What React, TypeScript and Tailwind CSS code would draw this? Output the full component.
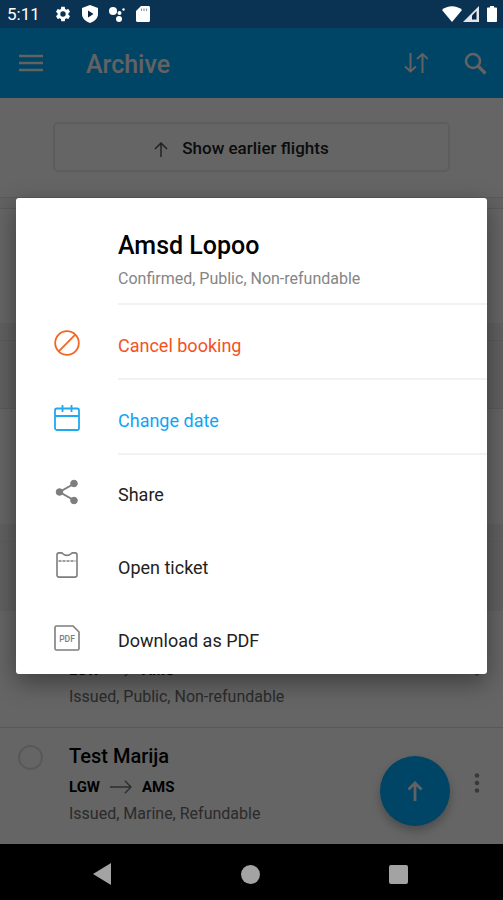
import React from "react";

const bands = [
  { id: "gap-1", className: "h-3 border-y border-[#e2e2e2] bg-[#f4f4f4]" },
  { id: "card-1", className: "h-[114px]" },
  { id: "gap-2", className: "h-[18px] border-b border-[#e2e2e2] bg-[#efefef]" },
  { id: "date-1", className: "h-[68px] border-b border-[#e2e2e2] bg-[#f0f0f0]" },
  { id: "card-2", className: "h-[115px]" },
  { id: "gap-3", className: "h-[18px] border-b border-[#e8e8e8] bg-[#efefef]" },
  { id: "date-2", className: "h-[69px] bg-[#f0f0f0]" },
];

type Booking = {
  id: number;
  name?: string;
  from: string;
  to: string;
  details: string;
};

const bookings: Booking[] = [
  {
    id: 1,
    from: "LGW",
    to: "AMS",
    details: "Issued, Public, Non-refundable",
  },
  {
    id: 2,
    name: "Test Marija",
    from: "LGW",
    to: "AMS",
    details: "Issued, Marine, Refundable",
  },
];

function StatusBar() {
  return (
    <div className="relative z-20 flex h-7 items-center justify-between bg-[#0a3353] pl-[7px] pr-[6px] text-white">
      <div className="flex items-center">
        <span className="w-[47px] text-[17px] leading-7">5:11</span>
        {/* Settings */}
        <svg viewBox="0 0 24 24" className="h-[18px] w-[18px]" fill="currentColor">
          <path d="M19.14 12.94c.04-.3.06-.61.06-.94s-.02-.64-.07-.94l2.03-1.58a.49.49 0 0 0 .12-.61l-1.92-3.32a.49.49 0 0 0-.59-.22l-2.39.96a7 7 0 0 0-1.62-.94l-.36-2.54A.48.48 0 0 0 13.92 2.4h-3.84a.48.48 0 0 0-.47.41l-.36 2.54c-.59.24-1.13.57-1.62.94l-2.39-.96a.48.48 0 0 0-.59.22L2.74 8.87a.48.48 0 0 0 .12.61l2.03 1.58a7.4 7.4 0 0 0 0 1.88l-2.03 1.58a.49.49 0 0 0-.12.61l1.92 3.32c.12.22.37.29.59.22l2.39-.96c.5.38 1.03.7 1.62.94l.36 2.54c.05.24.24.41.48.41h3.84c.24 0 .44-.17.47-.41l.36-2.54a7 7 0 0 0 1.62-.94l2.39.96c.22.08.47 0 .59-.22l1.92-3.32a.48.48 0 0 0-.12-.61zM12 15.6a3.6 3.6 0 1 1 0-7.2 3.6 3.6 0 0 1 0 7.2z" />
        </svg>
        {/* Play protect */}
        <svg viewBox="0 0 16 18" className="ml-[10px] h-[18px] w-4">
          <path d="M8 0 16 3v6c0 4-3.400 7.500-8 9-4.600-1.500-8-5-8-9V3z" fill="currentColor" />
          <path d="M6 5.500 11.500 9 6 12.500z" fill="#0a2345" />
        </svg>
        {/* Assistant */}
        <svg viewBox="0 0 18 18" className="ml-[10px] h-[18px] w-[18px]" fill="currentColor">
          <circle cx="5" cy="6" r="4" />
          <circle cx="11" cy="14" r="3" />
          <circle cx="11.500" cy="8" r="2" />
          <circle cx="15.500" cy="4.500" r="1.200" />
        </svg>
        {/* SD card */}
        <svg viewBox="0 0 14 16" className="ml-[10px] h-4 w-[14px]">
          <path d="M5 0h7.500C13.300 0 14 .7 14 1.500v13c0 .8-.7 1.500-1.500 1.500h-11C.7 16 0 15.300 0 14.500V5z" fill="currentColor" />
          <path d="M5.500 2.500v2.500M8 2.500v2.500M10.500 2.500v2.500" stroke="#8a99aa" strokeWidth="1.200" />
        </svg>
      </div>
      <div className="flex items-center">
        <svg viewBox="0 0 20 16" className="h-4 w-5" fill="currentColor">
          <path d="M0 4C5.500-1 14.500-1 20 4L10 16z" />
        </svg>
        <svg viewBox="0 0 16 16" className="ml-px h-4 w-4">
          <path d="M0 16 16 0v16z" fill="#dfe6ec" />
          <path d="M9 9.500 13.500 5v8.500H9z" fill="#0a2345" />
        </svg>
        <svg viewBox="0 0 10 16" className="ml-2 h-4 w-[10px]" fill="currentColor">
          <path d="M3 0h4v1.500h2c.6 0 1 .4 1 1V15c0 .6-.4 1-1 1H1c-.6 0-1-.4-1-1V2.500c0-.6.4-1 1-1h2z" />
        </svg>
      </div>
    </div>
  );
}

function AppHeader() {
  return (
    <header className="flex h-[70px] items-center bg-[#00aaff] pl-[19px] pr-4 text-[#f5f5f5]">
      <button aria-label="Menu">
        <svg viewBox="0 0 24 18" className="h-[18px] w-6" stroke="currentColor" strokeWidth="2.500">
          <path d="M0 2h24M0 9h24M0 16h24" />
        </svg>
      </button>
      <h1 className="ml-[43px] flex-1 pt-1 text-[25px] font-medium">Archive</h1>
      <button aria-label="Sort">
        <svg viewBox="0 0 24 22" className="h-[22px] w-6" fill="none" stroke="currentColor" strokeWidth="2">
          <path d="M6.500 1v18M1 14.500l5.500 5 5.500-5M18.500 21V2M13 7l5.500-5L24 7" />
        </svg>
      </button>
      <button aria-label="Search" className="ml-9">
        <svg viewBox="0 0 23 23" className="h-[23px] w-[23px]" fill="none" stroke="currentColor">
          <circle cx="9" cy="9" r="7" strokeWidth="2.600" />
          <path d="m14 14 7.500 7.500" strokeWidth="3.200" />
        </svg>
      </button>
    </header>
  );
}

function BookingRow({ booking }: { booking: Booking }) {
  return (
    <li className="flex h-[117px] items-start border-b border-[#dcdcdc] pl-[18px] pr-[22px] last:h-[116px] last:border-b-0">
      <input
        type="checkbox"
        aria-label={booking.name ?? "Booking"}
        className="mt-[17px] h-[25px] w-[25px] appearance-none rounded-full border-2 border-[#dcdcdc]"
      />
      <div className="ml-[26px] flex-1 pt-[14px]">
        <h2 className="h-7 text-xl leading-7 font-medium text-black">{booking.name}</h2>
        <p className="mt-1 flex items-center gap-[10px] text-[15px] leading-[26px] font-bold text-black">
          {booking.from}
          <svg viewBox="0 0 23 14" className="h-[14px] w-[22px] text-neutral-500" fill="none" stroke="currentColor" strokeWidth="1.500">
            <path d="M0 7h22M15.500.5 22 7l-6.500 6.500" />
          </svg>
          {booking.to}
        </p>
        <p className="text-base leading-7 text-[#6b6b6b]">{booking.details}</p>
      </div>
      <button aria-label="More options" className="mt-[45px] text-[#909090]">
        <svg viewBox="0 0 8 20" className="h-5 w-2" fill="currentColor">
          <circle cx="4" cy="2.500" r="2.300" />
          <circle cx="4" cy="10" r="2.300" />
          <circle cx="4" cy="17.500" r="2.300" />
        </svg>
      </button>
    </li>
  );
}

const CancelIcon = () => (
  <svg viewBox="0 0 26 26" className="h-[26px] w-[26px]" fill="none" stroke="currentColor" strokeWidth="1.800">
    <circle cx="13" cy="13" r="11.800" />
    <path d="M21.300 4.700 4.700 21.300" />
  </svg>
);

const CalendarIcon = () => (
  <svg viewBox="0 0 26 26" className="h-[26px] w-[26px]" fill="none" stroke="currentColor" strokeWidth="1.800">
    <rect x="1" y="3.500" width="24" height="21.500" rx="1.800" />
    <path d="M1 11h24M8.500 0v7M17.500 0v7" />
  </svg>
);

const ShareIcon = () => (
  <svg viewBox="0 0 26 26" className="h-[26px] w-[26px]" fill="currentColor" stroke="currentColor">
    <path d="M20.500 4.500 5.500 13l15 8.500" fill="none" strokeWidth="2" />
    <circle cx="20" cy="4.500" r="3.300" />
    <circle cx="5.500" cy="13" r="3.300" />
    <circle cx="20" cy="21.500" r="3.300" />
  </svg>
);

const TicketIcon = () => (
  <svg viewBox="0 0 26 26" className="h-[26px] w-[26px]" fill="none" stroke="currentColor" strokeWidth="1.600">
    <path d="M5 .9h2.500C9 .9 9 3.400 13 3.400S17 .9 18.500.9H21c1 0 2 .8 2 2v20.200c0 1.100-.9 2-2 2H5c-1.100 0-2-.9-2-2V2.900c0-1.200 1-2 2-2z" />
    <path d="M4.500 9h17" strokeDasharray="3 1" strokeWidth="1.500" />
  </svg>
);

const PdfIcon = () => (
  <svg viewBox="0 0 26 26" className="h-[26px] w-[26px]">
    <path d="M2.500 1H19l6 6v16.500c0 .8-.7 1.500-1.500 1.500h-21C1.700 25 1 24.300 1 23.500v-21C1 1.700 1.700 1 2.500 1z" fill="none" stroke="currentColor" strokeWidth="1.600" />
    <text x="13" y="16.500" textAnchor="middle" fontSize="8.500" fontWeight="500" fill="currentColor">
      PDF
    </text>
  </svg>
);

const actions = [
  { label: "Cancel booking", icon: CancelIcon, iconColor: "text-[#f26522]", textColor: "text-[#f4511e]", divider: true },
  { label: "Change date", icon: CalendarIcon, iconColor: "text-[#1fa9f0]", textColor: "text-[#0fa5f5]", divider: true },
  { label: "Share", icon: ShareIcon, iconColor: "text-[#7d7d7d]", textColor: "text-[#222222]", divider: false },
  { label: "Open ticket", icon: TicketIcon, iconColor: "text-[#7d7d7d]", textColor: "text-[#222222]", divider: false },
  { label: "Download as PDF", icon: PdfIcon, iconColor: "text-[#7d7d7d]", textColor: "text-[#222222]", divider: false },
];

function ActionDialog() {
  return (
    <div
      role="dialog"
      aria-labelledby="dialog-title"
      className="w-full rounded-[3px] bg-white shadow-[0_8px_24px_rgba(0,0,0,0.4)]"
    >
      <div className="ml-[102px] h-[107px] border-b-2 border-[#f2f2f2] pt-8">
        <h2 id="dialog-title" className="text-[25px] leading-8 font-medium text-black">
          Amsd Lopoo
        </h2>
        <p className="mt-1 text-base leading-[26px] text-[#858585]">Confirmed, Public, Non-refundable</p>
      </div>
      <ul>
        {actions.map(({ label, icon: Icon, iconColor, textColor, divider }) => (
          <li key={label} className={divider ? "h-[75px]" : "h-[73px]"}>
            <button className="flex h-full w-full items-center pl-[38px] text-left">
              <span className={iconColor}>
                <Icon />
              </span>
              <span
                className={`ml-[38px] flex h-full flex-1 items-center border-b-2 pt-2 text-lg ${textColor} ${
                  divider ? "border-[#f2f2f2]" : "border-transparent"
                }`}
              >
                {label}
              </span>
            </button>
          </li>
        ))}
      </ul>
    </div>
  );
}

export default function App() {
  return (
    <div className="flex min-h-screen flex-col bg-black font-[Roboto,sans-serif]">
      <StatusBar />

      <div className="relative flex-1 bg-[#fcfcfc]">
        <AppHeader />

        <main>
          <div className="px-[53px] pt-6 pb-[25px]">
            <button className="flex h-[50px] w-full items-center justify-center gap-[14px] rounded-[5px] border-2 border-[#e8e8e8] pt-1 pr-5 text-[17px] font-medium text-[#222222]">
              <svg viewBox="0 0 14 15" className="h-[15px] w-[14px] text-[#555555]" fill="none" stroke="currentColor" strokeWidth="1.500">
                <path d="M7 15V1M1 7l6-6 6 6" />
              </svg>
              Show earlier flights
            </button>
          </div>
          {bands.map((band) => (
            <div key={band.id} className={band.className} />
          ))}
          <ul>
            {bookings.map((booking) => (
              <BookingRow key={booking.id} booking={booking} />
            ))}
          </ul>
        </main>

        {/* Scroll to top */}
        <button
          aria-label="Scroll to top"
          className="absolute right-[53px] bottom-[18px] flex h-[70px] w-[70px] items-center justify-center rounded-full bg-[#00aaff] text-[#f5f5f5] shadow-[0_5px_10px_rgba(0,0,0,0.25)]"
        >
          <svg viewBox="0 0 16 20" className="h-5 w-4" fill="none" stroke="currentColor" strokeWidth="2.800">
            <path d="M8 20V2M1.500 8.500 8 2l6.500 6.500" />
          </svg>
        </button>

        {/* Dialog overlay */}
        <div className="absolute inset-0 z-10 flex items-center justify-center bg-black/60 px-4">
          <ActionDialog />
        </div>
      </div>

      {/* System navigation */}
      <nav className="flex h-14 items-center justify-between bg-black pt-1 pr-[95px] pl-[93px] text-[#a3a3a3]">
        <button aria-label="Back">
          <svg viewBox="0 0 18 22" className="h-[22px] w-[18px]" fill="currentColor">
            <path d="M0 11 18 0v22z" />
          </svg>
        </button>
        <button aria-label="Home" className="h-[19px] w-[19px] rounded-full bg-[#a3a3a3]" />
        <button aria-label="Recent apps" className="h-[19px] w-[19px] rounded-[2px] bg-[#a3a3a3]" />
      </nav>
    </div>
  );
}
